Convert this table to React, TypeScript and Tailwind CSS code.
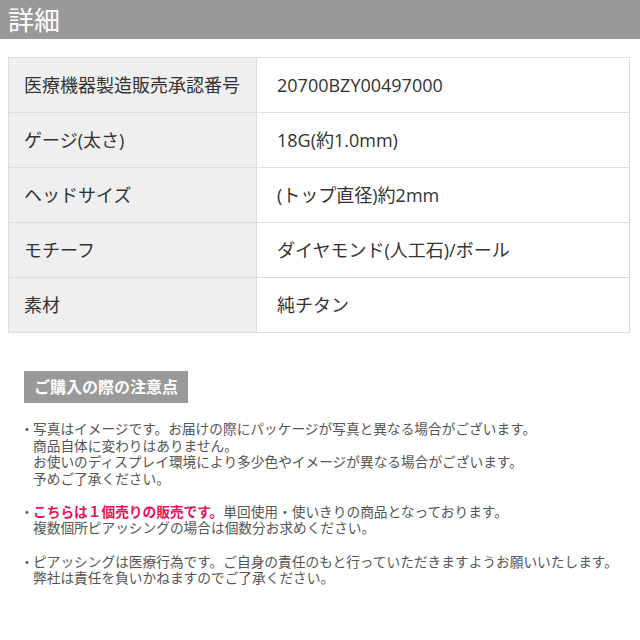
const rows: { label: string; value: string }[] = [
  { label: "医療機器製造販売承認番号", value: "20700BZY00497000" },
  { label: "ゲージ(太さ)", value: "18G(約1.0mm)" },
  { label: "ヘッドサイズ", value: "(トップ直径)約2mm" },
  { label: "モチーフ", value: "ダイヤモンド(人工石)/ボール" },
  { label: "素材", value: "純チタン" },
];

function Note({ children }: { children: React.ReactNode }) {
  return (
    <div className="flex">
      <span className="w-[13px] shrink-0 text-center">・</span>
      <div>{children}</div>
    </div>
  );
}

export default function App() {
  return (
    <div
      className="w-[640px] h-[640px] bg-white overflow-hidden"
      style={{ fontFamily: '"Open Sans", "Noto Sans CJK JP", sans-serif' }}
    >
      <div className="h-[39px] bg-[#999999] flex items-center px-2">
        <h2 className="text-white text-[26px] leading-none">詳細</h2>
      </div>

      <table className="mt-[18px] ml-[8px] w-[622px] border-collapse text-[18px] text-[#333]">
        <tbody>
          {rows.map((row) => (
            <tr key={row.label} className="h-[55px]">
              <th className="w-[248px] bg-[#efefef] border border-[#dddddd] text-left font-normal pl-[15px]">
                {row.label}
              </th>
              <td className="border border-[#dddddd] pl-[20px]">{row.value}</td>
            </tr>
          ))}
        </tbody>
      </table>

      <div className="mt-[38px] ml-[24px]">
        <span className="inline-block bg-[#999999] text-white font-bold text-[16px] leading-[32px] px-[10px]">
          ご購入の際の注意点
        </span>
      </div>

      <div className="mt-[18px] ml-[20px] text-[13.7px] leading-[16.6px] text-[#555] flex flex-col gap-[16.5px]">
        <Note>
          写真はイメージです。お届けの際にパッケージが写真と異なる場合がございます。
          <br />
          商品自体に変わりはありません。
          <br />
          お使いのディスプレイ環境により多少色やイメージが異なる場合がございます。
          <br />
          予めご了承ください。
        </Note>
        <Note>
          <span className="text-[#e8115a] font-bold">こちらは１個売りの販売です。</span>
          単回使用・使いきりの商品となっております。
          <br />
          複数個所ピアッシングの場合は個数分お求めください。
        </Note>
        <Note>
          ピアッシングは医療行為です。ご自身の責任のもと行っていただきますようお願いいたします。
          <br />
          弊社は責任を負いかねますのでご了承ください。
        </Note>
      </div>
    </div>
  );
}
